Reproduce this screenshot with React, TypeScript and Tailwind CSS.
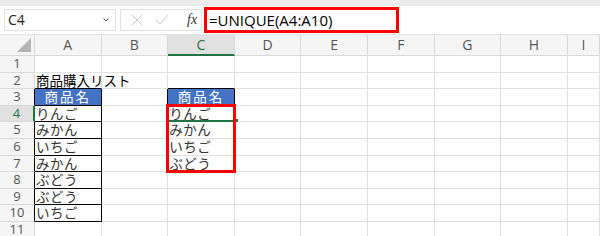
import React from "react";

const cols = ["A", "B", "C", "D", "E", "F", "G", "H", "I"];
const listA = ["りんご", "みかん", "いちご", "みかん", "ぶどう", "ぶどう", "いちご"];
const listC = ["りんご", "みかん", "いちご", "ぶどう"];

const font = { fontFamily: '"Noto Sans CJK JP", "Noto Sans", sans-serif' };

function cellText(row: number, col: string): string {
  if (row === 2 && col === "A") return "商品購入リスト";
  if (row === 3 && (col === "A" || col === "C")) return "商品名";
  if (col === "A" && row >= 4 && row <= 10) return listA[row - 4];
  if (col === "C" && row >= 4 && row <= 7) return listC[row - 4];
  return "";
}

function Cell({ row, col }: { row: number; col: string }) {
  const text = cellText(row, col);
  const header = row === 3 && (col === "A" || col === "C");
  const inA = col === "A" && row >= 3 && row <= 10;
  const inC = col === "C" && row === 3;
  const aboveTable = row === 2 && (col === "A" || col === "C");
  const leftOfC = col === "B" && row === 3;

  let cls = "relative h-[16.6px] border-r border-b border-[#e1e1e1] text-[13.5px] leading-[15.6px] text-[#333] whitespace-nowrap";
  if (inA || inC) cls += " !border-r-black !border-b-black";
  if (leftOfC) cls += " !border-r-black";
  if (aboveTable) cls += " !border-b-black";
  if (header) cls += " bg-[#4472c4] !text-white text-center tracking-[2px]";
  else cls += " pl-[1px] tracking-[0.5px]";
  if (row === 2 && col === "A") cls += " overflow-visible z-10 text-black !tracking-normal";
  else cls += " overflow-hidden";

  return <div className={cls}>{text}</div>;
}

export default function App() {
  const rows = Array.from({ length: 11 }, (_, i) => i + 1);
  return (
    <div className="w-[600px] h-[236px] overflow-hidden bg-white relative" style={font}>
      <div className="h-[6px] bg-[#ececec]" />
      <div className="flex items-center h-[29px] bg-white border-b border-[#e6e6e6]">
        <div className="ml-[4px] w-[112px] h-[22px] border border-[#e1e1e1] flex items-center justify-between px-[3px]">
          <span className="text-[14px] leading-[18px] text-[#222]" style={{ fontFamily: '"Open Sans", sans-serif' }}>C4</span>
          <svg width="8" height="6" viewBox="0 0 8 6" className="mr-[2px]">
            <path d="M1.5 1.5 L4 4 L6.5 1.5" stroke="#555" strokeWidth="1" fill="none" />
          </svg>
        </div>
        <div className="ml-[4px] w-[82px] h-[22px] border border-[#e1e1e1] flex items-center pl-[10px] gap-[12px]">
          <svg width="12" height="12" viewBox="0 0 12 12">
            <path d="M1 1 L11 11 M11 1 L1 11" stroke="#c8c8c8" strokeWidth="1" />
          </svg>
          <svg width="14" height="12" viewBox="0 0 14 12">
            <path d="M1 6 L5 10 L13 1" stroke="#c8c8c8" strokeWidth="1" fill="none" />
          </svg>
          <span className="ml-[6px] text-[14px] leading-[16px] italic text-[#333]" style={{ fontFamily: '"Liberation Serif", serif' }}>fx</span>
        </div>
        <div className="flex-1 h-[29px] flex items-center">
          <div className="ml-[2px] w-[195px] h-[26px] border-[3px] border-[#ff0000] flex items-center pl-[2px]">
            <span className="text-[15px] leading-[18px] text-black" style={{ fontFamily: '"Open Sans", sans-serif' }}>=UNIQUE(A4:A10)</span>
          </div>
        </div>
      </div>

      <div className="grid grid-cols-[35px_repeat(8,66.6px)_1fr]">
        <div className="h-[21px] bg-[#f5f5f5] border-r border-b border-[#d9d9d9] relative">
          <svg width="14" height="14" viewBox="0 0 14 14" className="absolute right-[3px] bottom-[3px]">
            <path d="M14 0 L14 14 L0 14 Z" fill="#b4b4b4" />
          </svg>
        </div>
        {cols.map((c) => (
          <div
            key={c}
            className={
              c === "C"
                ? "h-[21px] bg-[#e1e1e1] border-r border-b-2 border-r-[#d9d9d9] border-b-[#217346] text-[#217346] text-[14px] leading-[18px] flex items-center justify-center"
                : "h-[21px] bg-[#f5f5f5] border-r border-b border-[#d9d9d9] text-[#555] text-[14px] leading-[18px] flex items-center justify-center"
            }
            style={{ fontFamily: '"Open Sans", sans-serif' }}
          >
            {c}
          </div>
        ))}
        {rows.map((r) => (
          <React.Fragment key={r}>
            <div
              className={
                r === 4
                  ? "h-[16.6px] bg-[#e1e1e1] border-r-2 border-b border-r-[#217346] border-b-[#d9d9d9] text-[#217346] text-[13px] leading-[15.6px] text-center"
                  : "h-[16.6px] bg-[#f5f5f5] border-r border-b border-[#d9d9d9] text-[#555] text-[13px] leading-[15.6px] text-center" +
                    (r >= 3 && r <= 10 ? " !border-r-black" : "")
              }
              style={{ fontFamily: '"Open Sans", sans-serif' }}
            >
              {r}
            </div>
            {cols.map((c) => (
              <Cell key={c} row={r} col={c} />
            ))}
          </React.Fragment>
        ))}
      </div>

      {/* active cell C4 and the highlighted result range */}
      <div className="absolute left-[168px] top-[120px] w-[68px] h-[2px] bg-[#217346]" />
      <div className="absolute left-[234px] top-[118px] w-[5px] h-[5px] bg-[#217346] border border-white" />
      <div className="absolute left-[166px] top-[104px] w-[70px] h-[69px] border-[3px] border-[#ff0000]" />
    </div>
  );
}
